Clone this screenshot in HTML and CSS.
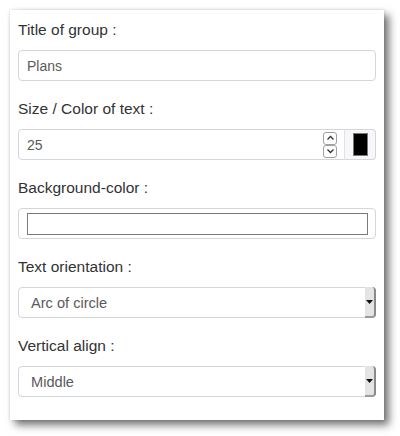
FILE: index.html
```html
<!DOCTYPE html>
<html>
<head>
<meta charset="utf-8">
<link rel="stylesheet" href="styles.css">
</head>
<body>
<div class="panel">
  <div class="group">
    <div class="lbl">Title of group :</div>
    <div class="field text">Plans</div>
  </div>
  <div class="group">
    <div class="lbl">Size / Color of text :</div>
    <div class="igroup">
      <div class="field num">
        <span>25</span>
        <span class="spin">
          <span class="sbtn"><svg width="9" height="6" viewBox="0 0 9 6"><polyline points="1.5,4.5 4.5,1.5 7.5,4.5" fill="none" stroke="#333" stroke-width="1.3"/></svg></span>
          <span class="sbtn"><svg width="9" height="6" viewBox="0 0 9 6"><polyline points="1.5,1.5 4.5,4.5 7.5,1.5" fill="none" stroke="#333" stroke-width="1.3"/></svg></span>
        </span>
      </div>
      <div class="addon"><span class="swatch"></span></div>
    </div>
  </div>
  <div class="group">
    <div class="lbl">Background-color :</div>
    <div class="field color"><span class="colorbox"></span></div>
  </div>
  <div class="group">
    <div class="lbl">Text orientation :</div>
    <div class="field select"><span class="stext">Arc of circle</span><span class="arrow"><svg width="7" height="4" viewBox="0 0 7 4"><polygon points="0,0 7,0 3.5,4" fill="#111"/></svg></span></div>
  </div>
  <div class="group">
    <div class="lbl">Vertical align :</div>
    <div class="field select"><span class="stext">Middle</span><span class="arrow"><svg width="7" height="4" viewBox="0 0 7 4"><polygon points="0,0 7,0 3.5,4" fill="#111"/></svg></span></div>
  </div>
</div>
</body>
</html>
```
FILE: styles.css
```css
* { box-sizing: border-box; }
html, body { margin: 0; padding: 0; background: #fff; }
body {
  font-family: "Liberation Sans", Arial, sans-serif;
  width: 400px;
  height: 436px;
  overflow: hidden;
}
.panel {
  margin: 10px 0 0 10px;
  width: 374px;
  height: 410px;
  background: #fff;
  padding: 8px 8px 0 8px;
  box-shadow: 5px 5px 8px rgba(0, 0, 0, 0.55), 0 0 3px rgba(0, 0, 0, 0.15);
}
.group { margin-bottom: 16px; }
.lbl {
  font-size: 15.5px;
  line-height: 23px;
  color: #333;
  margin-bottom: 9px;
}
.field {
  height: 31px;
  border: 1px solid #d3d6da;
  border-radius: 4px;
  background: #fff;
  font-size: 14px;
  color: #5a5a5a;
  display: flex;
  align-items: center;
}
.text { padding-left: 8px; }
.igroup { display: flex; }
.num {
  flex: 1;
  padding-left: 8px;
  padding-right: 7px;
  justify-content: space-between;
  border-radius: 4px 0 0 4px;
}
.spin { display: flex; flex-direction: column; }
.sbtn {
  width: 14px;
  height: 13px;
  border: 1px solid #a0a0a0;
  border-radius: 3px;
  display: flex;
  align-items: center;
  justify-content: center;
  background: #fff;
}
.addon {
  width: 32px;
  height: 31px;
  border: 1px solid #d3d6da;
  border-left: 1px solid #e0e2e5;
  border-radius: 0 4px 4px 0;
  margin-left: -1px;
  background: #f7f7f9;
  display: flex;
  align-items: center;
  justify-content: center;
}
.swatch {
  width: 15px;
  height: 23px;
  background: #000;
  border: 1px solid #777;
}
.color { padding: 0 7px 0 8px; }
.colorbox {
  flex: 1;
  height: 22px;
  border: 1px solid #7a7a7a;
}
.select {
  padding-left: 12px;
  justify-content: space-between;
  align-items: stretch;
  font-size: 14.6px;
}
.stext { display: flex; align-items: center; }
.arrow {
  width: 11px;
  margin: -1px -1px -1px 0;
  background: #e4e4e4;
  border-right: 2px solid #8a8a8a;
  border-bottom: 2px solid #9a9a9a;
  border-radius: 0 4px 4px 0;
  display: flex;
  align-items: center;
  justify-content: center;
}
```
